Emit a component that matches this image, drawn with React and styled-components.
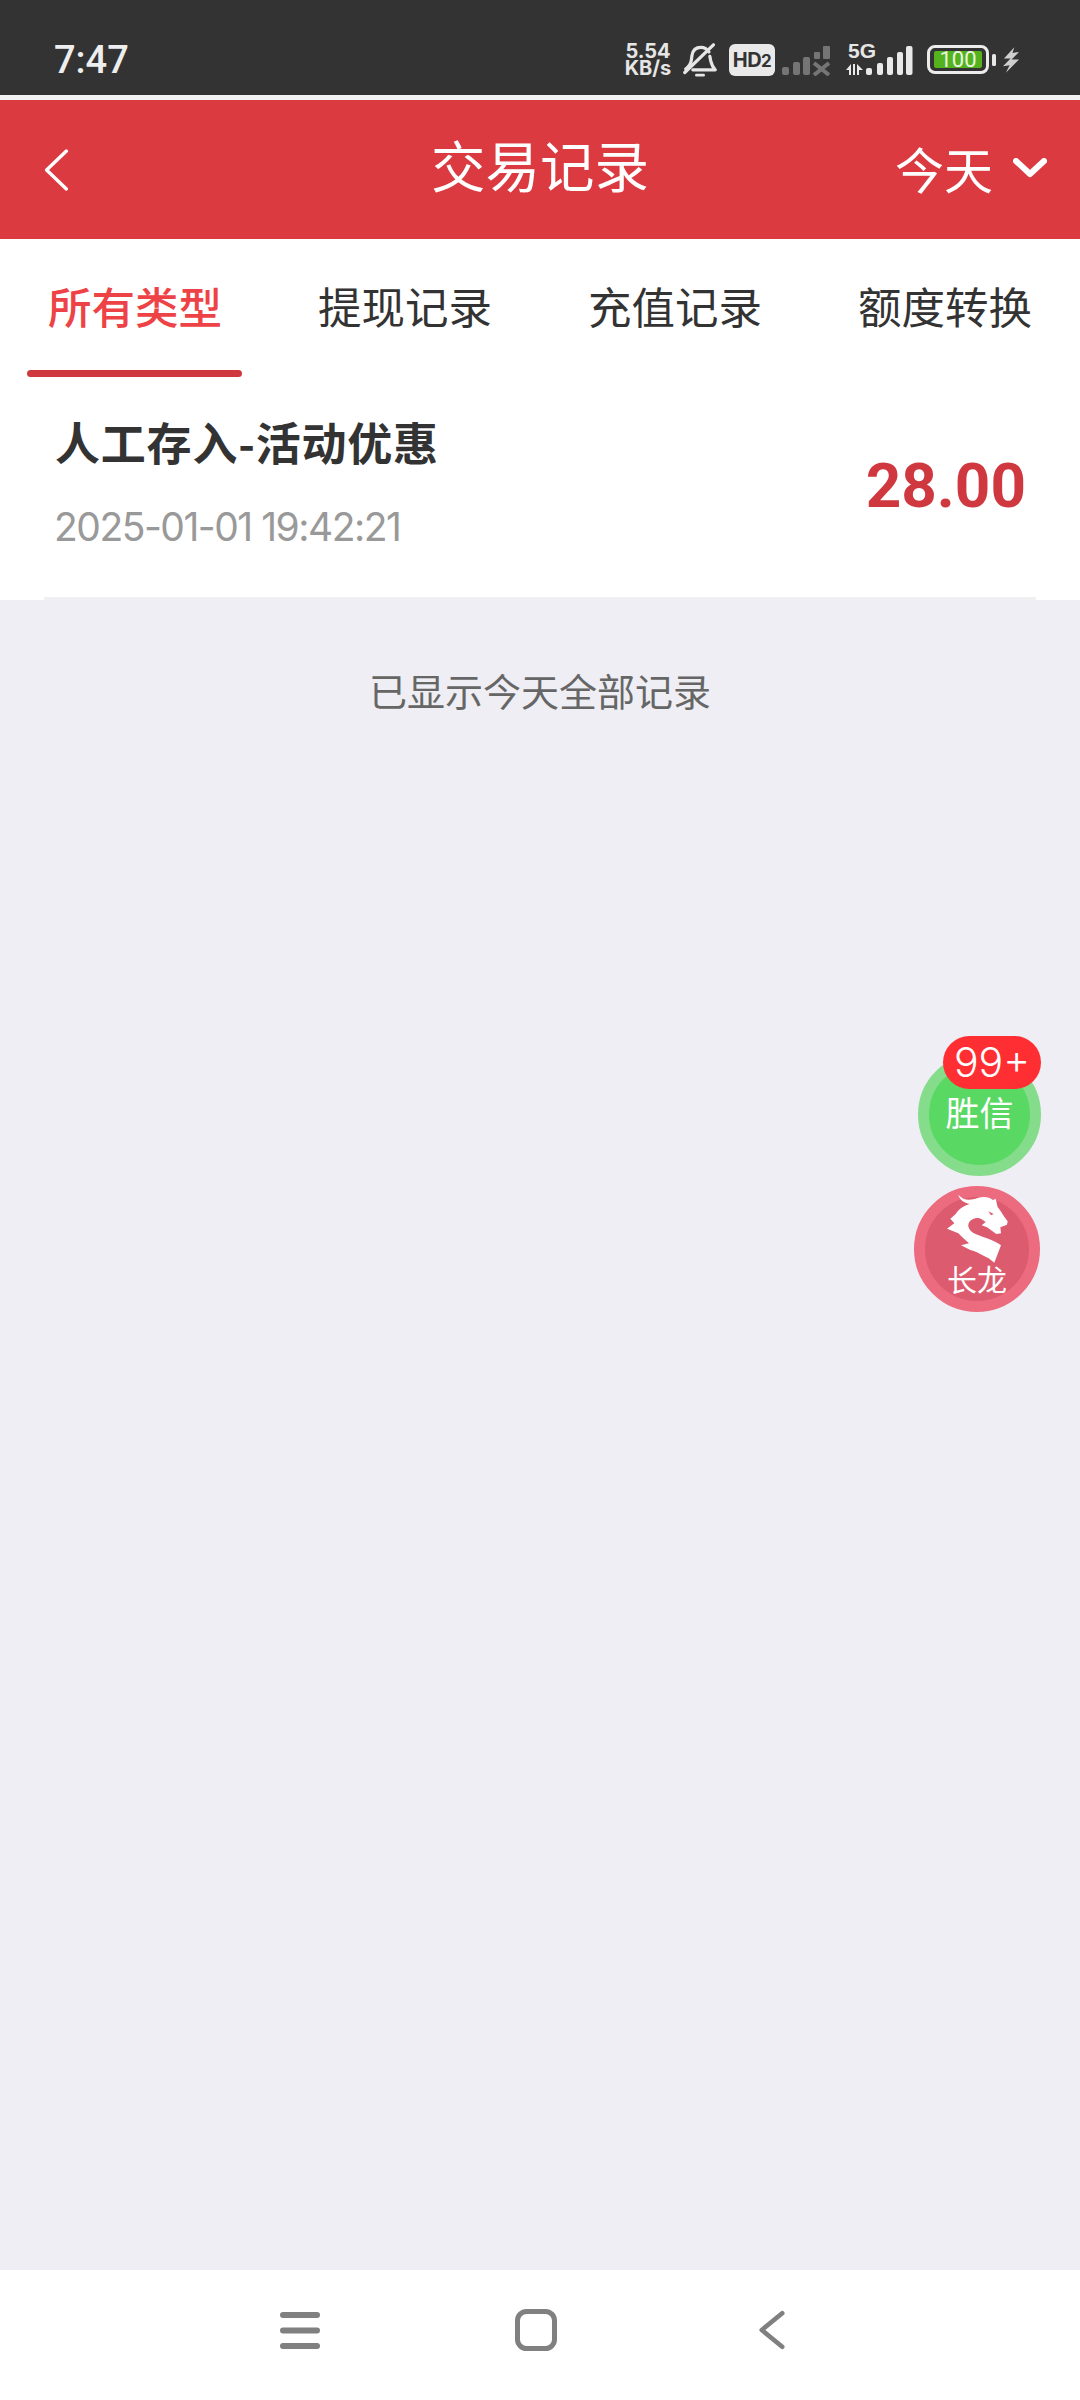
import React from "react";
import styled, { createGlobalStyle } from "styled-components";

const Global = createGlobalStyle`
  html, body { margin: 0; padding: 0; background: #eeeef4; }
  * { box-sizing: border-box; }
`;
const CJK = `"Noto Sans CJK SC", "Noto Sans", sans-serif`;

const Page = styled.div`
  position: relative;
  width: 1080px;
  height: 2400px;
  display: flex;
  flex-direction: column;
  background: #eeeef4;
  font-family: ${CJK};
  overflow: hidden;
`;
const StatusBar = styled.div`
  height: 100px;
  flex: none;
  background: #333333;
  border-bottom: 5px solid #f2f2f2;
  display: flex;
  align-items: center;
  justify-content: space-between;
  padding: 24px 60px 0 54px;
`;
const Clock = styled.div`
  font: 500 38px/1 Roboto, sans-serif;
  color: #eeeeee;
`;
const StatusIcons = styled.div`
  display: flex;
  align-items: center;
  height: 40px;
`;
const Speed = styled.div`
  display: flex;
  flex-direction: column;
  align-items: center;
  font: 700 20px/17px Inter, sans-serif;
  color: #e6e6e6;
  width: 48px;
  margin-right: 11px;
`;
const Hd = styled.div`
  width: 46px;
  height: 32px;
  background: #e9e9e9;
  border-radius: 6px;
  color: #333;
  font: 700 20px/32px Inter, sans-serif;
  letter-spacing: -0.5px;
  text-align: center;
  margin: 0 7px 0 12px;
  & > span {
    font-size: 17px;
  }
`;
const NetStack = styled.div`
  position: relative;
  width: 67px;
  height: 32px;
  margin-left: 16px;
`;
const FiveG = styled.span`
  position: absolute;
  left: 2px;
  top: -3px;
  font: 700 21px/20px "Liberation Sans", sans-serif;
  color: #e6e6e6;
`;
const Battery = styled.div`
  width: 62px;
  height: 29px;
  border: 3px solid #ececec;
  border-radius: 8px;
  padding: 3px 4px;
  margin-left: 14px;
  display: flex;
`;
const BatteryFill = styled.div`
  flex: 1;
  background: #55b21f;
  border-radius: 2px;
  color: #e8f5df;
  font: 400 22px/17px Roboto, sans-serif;
  text-align: center;
`;
const Header = styled.header`
  height: 139px;
  flex: none;
  background: #da3a40;
  display: grid;
  grid-template-columns: 1fr auto 1fr;
  align-items: center;
  padding: 0 33px;
  color: #fff;
`;
const BackSlot = styled.div`
  display: flex;
  padding-left: 10px;
`;
const Title = styled.h1`
  margin: 0 0 10px;
  font-size: 54.5px;
  font-weight: 400;
  line-height: 1;
`;
const Range = styled.div`
  justify-self: end;
  display: flex;
  align-items: center;
  gap: 20px;
  font-size: 49px;
  line-height: 1;
  margin-bottom: 4px;
`;
const Tabs = styled.nav`
  flex: none;
  height: 139px;
  background: #fff;
  display: grid;
  grid-template-columns: repeat(4, 270px);
`;
const Tab = styled.div`
  position: relative;
  display: flex;
  justify-content: center;
  padding-top: 37px;
  font-size: 43.5px;
  line-height: 1.4;
  font-weight: ${(p) => (p.$active ? 500 : 400)};
  color: ${(p) => (p.$active ? "#ee4346" : "#333333")};
`;
const Underline = styled.span`
  position: absolute;
  left: 27px;
  right: 28px;
  top: 131px;
  height: 7px;
  border-radius: 4px;
  background: #d0383f;
`;
const Row = styled.div`
  flex: none;
  background: #fff;
  height: 222px;
  padding: 0 44px;
`;
const RowInner = styled.div`
  height: 100%;
  border-bottom: 3px solid #f0f0f2;
  display: flex;
  align-items: center;
  justify-content: space-between;
  padding: 0 10px 0 11px;
`;
const RowText = styled.div`
  display: flex;
  flex-direction: column;
  gap: 19px;
`;
const RowTitle = styled.div`
  font-size: 45px;
  letter-spacing: 0.8px;
  line-height: 60px;
  font-weight: 700;
  color: #333;
  position: relative;
  top: -12px;
`;
const RowDate = styled.div`
  font: 400 39px/48px Inter, sans-serif;
  letter-spacing: -1.5px;
  color: #999;
  margin-left: -1px;
`;
const Amount = styled.div`
  font: 700 62px/1 Roboto, sans-serif;
  color: #d0383f;
  margin-bottom: 4px;
`;
const Notice = styled.div`
  flex: none;
  padding-top: 60px;
  text-align: center;
  font-size: 38px;
  line-height: 60px;
  color: #666;
`;
const Spacer = styled.div`
  flex: 1;
`;
const NavBar = styled.div`
  flex: none;
  height: 130px;
  background: #fff;
  display: grid;
  grid-template-columns: repeat(3, 236px);
  justify-content: center;
  align-items: center;
  justify-items: center;
  padding: 0 8px 10px 0;
`;
const Float = styled.div`
  position: absolute;
  left: ${(p) => p.$x}px;
  top: ${(p) => p.$y}px;
  width: ${(p) => p.$d}px;
  height: ${(p) => p.$d}px;
  border-radius: 50%;
  background: ${(p) => p.$bg};
  border: 11px solid ${(p) => p.$ring};
  color: #fff;
  display: flex;
  flex-direction: column;
  align-items: center;
`;
const GreenLabel = styled.span`
  font-size: 34px;
  line-height: 40px;
  margin-top: 28px;
`;
const RedLabel = styled.span`
  font-size: 30px;
  line-height: 36px;
  position: absolute;
  bottom: 5px;
`;
const Badge = styled.div`
  position: absolute;
  left: 943px;
  top: 1036px;
  width: 98px;
  height: 53px;
  border-radius: 27px;
  background: #ff2e33;
  color: #fff;
  font: 300 41px/53px Inter, sans-serif;
  text-align: center;
`;

const Bell = () => (
  <svg width="34" height="38" viewBox="0 0 38 40" fill="none" stroke="#e6e6e6" strokeWidth="3.6" strokeLinecap="round" strokeLinejoin="round">
    <path d="M3 30 C7 27 9 24 9.500 19 L10 15 C11 9 15 6 20 6 C24 6 27 8 29 11" />
    <path d="M30 16 L31 21 C32 25 33 28 36 31 L11 31" />
    <path d="M2 34 L34 3" />
    <path d="M15 37 H23" strokeWidth="3" />
  </svg>
);
const SimOne = () => (
  <svg width="48" height="32" viewBox="0 0 48 32" fill="#757575">
    <rect x="0" y="23" width="7" height="8" rx="2" />
    <rect x="11" y="18" width="7" height="13" rx="2" />
    <rect x="21" y="13" width="7" height="18" rx="2" />
    <rect x="32" y="8" width="6" height="7" rx="1" />
    <rect x="41" y="2" width="7" height="13" rx="1" />
    <path d="M32 19 L47 31 M47 19 L32 31" stroke="#757575" strokeWidth="4" fill="none" />
  </svg>
);
const SimTwo = () => (
  <svg width="67" height="32" viewBox="0 0 67 32" fill="#e9e9e9" style={{ position: "absolute", left: 0, top: 0 }}>
    <path d="M0 26 L5 20 V31 H3 V26 Z M7 20 H9 V31 H7 Z M11 20 L17 26 H13 V31 H11 Z" />
    <rect x="20" y="24" width="6" height="7" rx="2" />
    <rect x="31" y="19" width="6" height="12" rx="2" />
    <rect x="41" y="13" width="6" height="18" rx="2" />
    <rect x="51" y="8" width="6" height="23" rx="2" />
    <rect x="60" y="2" width="6.500" height="29" rx="2" />
  </svg>
);
const Nub = () => (
  <svg width="4" height="12" viewBox="0 0 4 12" style={{ marginLeft: 3 }}>
    <rect width="4" height="12" rx="1.500" fill="#e6e6e6" />
  </svg>
);
const Bolt = () => (
  <svg width="17" height="26" viewBox="0 0 18 27" fill="#cfcfcf" style={{ marginLeft: 7 }}>
    <path d="M12 0 L1 12 L8 12 L0 20 L7 19 L3 27 L17 13 L9 13 L17 5 L10 6 Z" />
  </svg>
);
const BackIcon = () => (
  <svg width="27" height="48" viewBox="0 0 30 48" fill="none" stroke="#fff" strokeWidth="3.800" strokeLinecap="round" strokeLinejoin="round">
    <path d="M26 3 L4 24 L26 45" />
  </svg>
);
const ChevronIcon = () => (
  <svg width="34" height="20" viewBox="0 0 34 20" fill="none" stroke="#fff" strokeWidth="6" strokeLinecap="round" strokeLinejoin="round">
    <path d="M3 3 L17 16 L31 3" />
  </svg>
);
const MenuIcon = () => (
  <svg width="40" height="37" viewBox="0 0 40 37" fill="#808080">
    <rect y="0" width="40" height="6" rx="3" />
    <rect y="15.500" width="40" height="6" rx="3" />
    <rect y="31" width="40" height="6" rx="3" />
  </svg>
);
const HomeIcon = () => (
  <svg width="42" height="42" viewBox="0 0 42 42" fill="none" stroke="#808080" strokeWidth="5">
    <rect x="2.500" y="2.500" width="37" height="37" rx="9" />
  </svg>
);
const NavBack = () => (
  <svg width="26" height="42" viewBox="0 0 28 42" fill="none" stroke="#808080" strokeWidth="5" strokeLinecap="round" strokeLinejoin="round">
    <path d="M25 3 L3 21 L25 39" />
  </svg>
);
const Dragon = () => (
  <svg width="100" height="90" viewBox="0 0 300 270" fill="#fff" style={{ margin: "-7px 0 0 -4px", flex: "none" }}>
    <path d="M100 14 C112 28 130 34 158 24 C176 18 194 22 204 30 L212 26 L218 52 C226 60 234 76 248 94 L246 104 L226 112 L228 130 L214 132 L186 112 L170 106 L182 96 L170 88 C158 80 146 84 136 92 C126 102 128 116 144 128 C166 140 206 148 228 166 L208 218 L190 204 C172 196 150 182 136 180 L108 166 L132 160 L112 142 L100 130 L66 116 L88 100 L76 86 L92 72 C100 58 114 48 134 42 C118 38 104 30 100 14 Z" />
    <path d="M190 64 L206 72 L198 76 Z" fill="#dd5b6e" />
  </svg>
);

const tabs = ["所有类型", "提现记录", "充值记录", "额度转换"];

export default function App() {
  return (
    <Page>
      <Global />
      <StatusBar>
        <Clock>7:47</Clock>
        <StatusIcons>
          <Speed><span>5.54</span><span>KB/s</span></Speed>
          <Bell />
          <Hd>HD<span>2</span></Hd>
          <SimOne />
          <NetStack><SimTwo /><FiveG>5G</FiveG></NetStack>
          <Battery><BatteryFill>100</BatteryFill></Battery>
          <Nub />
          <Bolt />
        </StatusIcons>
      </StatusBar>
      <Header>
        <BackSlot><BackIcon /></BackSlot>
        <Title>交易记录</Title>
        <Range>今天<ChevronIcon /></Range>
      </Header>
      <Tabs>
        {tabs.map((t, i) => (
          <Tab key={t} $active={i === 0}>{t}{i === 0 && <Underline />}</Tab>
        ))}
      </Tabs>
      <Row>
        <RowInner>
          <RowText>
            <RowTitle>人工存入-活动优惠</RowTitle>
            <RowDate>2025-01-01 19:42:21</RowDate>
          </RowText>
          <Amount>28.00</Amount>
        </RowInner>
      </Row>
      <Notice>已显示今天全部记录</Notice>
      <Spacer />
      <NavBar>
        <MenuIcon />
        <HomeIcon />
        <NavBack />
      </NavBar>
      <Float $x={918} $y={1053} $d={123} $bg="#5ad864" $ring="#85dd8c">
        <GreenLabel>胜信</GreenLabel>
      </Float>
      <Badge>99+</Badge>
      <Float $x={914} $y={1186} $d={126} $bg="#dd5b6e" $ring="#ec6b7e">
        <Dragon />
        <RedLabel>长龙</RedLabel>
      </Float>
    </Page>
  );
}
